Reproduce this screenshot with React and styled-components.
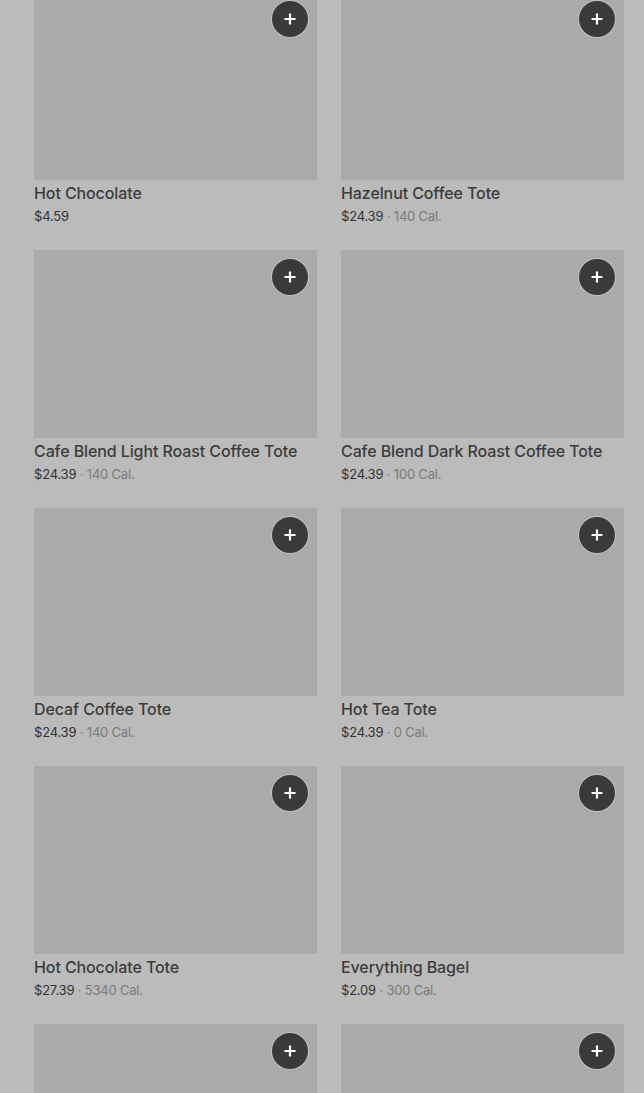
import React from "react";
import styled, { createGlobalStyle } from "styled-components";

const items = [
  { name: "Hot Chocolate", price: "$4.59" },
  { name: "Hazelnut Coffee Tote", price: "$24.39", cal: "140 Cal." },
  { name: "Cafe Blend Light Roast Coffee Tote", price: "$24.39", cal: "140 Cal." },
  { name: "Cafe Blend Dark Roast Coffee Tote", price: "$24.39", cal: "100 Cal." },
  { name: "Decaf Coffee Tote", price: "$24.39", cal: "140 Cal." },
  { name: "Hot Tea Tote", price: "$24.39", cal: "0 Cal." },
  { name: "Hot Chocolate Tote", price: "$27.39", cal: "5340 Cal." },
  { name: "Everything Bagel", price: "$2.09", cal: "300 Cal." },
  { name: "", price: "" },
  { name: "", price: "" },
];

const PlusIcon = () => (
  <svg width="14" height="14" viewBox="0 0 14 14">
    <path d="M7 1.5v11M1.5 7h11" stroke="#fff" strokeWidth="2.2" />
  </svg>
);

const App = () => (
  <>
    <GlobalStyle />
    <Page>
      <Grid>
        {items.map((item, i) => (
          <Card key={i}>
            <Thumb>
              <AddButton aria-label="Add">
                <PlusIcon />
              </AddButton>
            </Thumb>
            {item.name && (
              <Info>
                <Title>{item.name}</Title>
                <Meta>
                  {item.price}
                  {item.cal && <Cal> · {item.cal}</Cal>}
                </Meta>
              </Info>
            )}
          </Card>
        ))}
      </Grid>
    </Page>
  </>
);

export default App;

const GlobalStyle = createGlobalStyle`
  html, body {
    margin: 0;
    background: #bbbbbb;
    font-family: Inter, Roboto, "Liberation Sans", sans-serif;
    overflow: hidden;
  }
`;

const Page = styled.div`
  height: 1093px;
  overflow: hidden;
  padding: 0 20px 0 34px;
`;

const Grid = styled.div`
  display: grid;
  grid-template-columns: 283px 283px;
  column-gap: 24px;
  row-gap: 24px;
  margin-top: -8px;
`;

const Card = styled.div`
  display: flex;
  flex-direction: column;
`;

const Thumb = styled.div`
  position: relative;
  height: 188px;
  background: #aaaaaa;
`;

const AddButton = styled.button`
  position: absolute;
  top: 9px;
  right: 9px;
  width: 36px;
  height: 36px;
  border-radius: 50%;
  border: none;
  padding: 0;
  background: #3a3a3a;
  box-shadow: 0 0 0 1px rgba(220, 220, 220, 0.5);
  display: flex;
  align-items: center;
  justify-content: center;
  cursor: pointer;
`;

const Info = styled.div`
  display: flex;
  flex-direction: column;
  padding-top: 3px;
  height: 43px;
`;

const Title = styled.div`
  font-size: 16px;
  font-weight: 500;
  line-height: 20px;
  color: #3c3c3c;
  letter-spacing: -0.1px;
`;

const Meta = styled.div`
  margin-top: 3px;
  font-size: 13px;
  line-height: 20px;
  color: #333;
  letter-spacing: -0.2px;
`;

const Cal = styled.span`
  color: #7a7a7a;
`;
